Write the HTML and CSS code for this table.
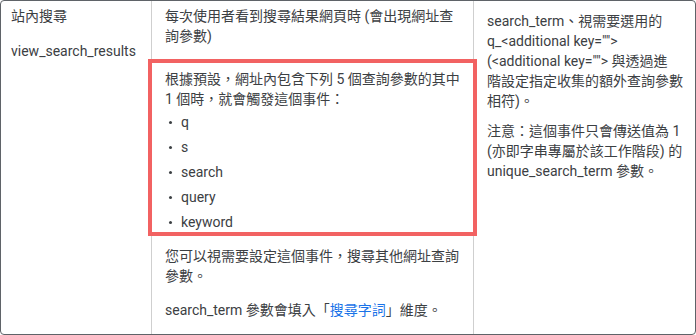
FILE: index.html
```html
<!DOCTYPE html>
<html lang="zh-Hant">
<head>
<meta charset="utf-8">
<link rel="stylesheet" href="styles.css">
</head>
<body>
<div class="frame">
  <div class="row">
    <div class="cell c1">
      <p class="p-first">站內搜尋</p>
      <p class="p-code">view_search_results</p>
    </div>
    <div class="cell c2">
      <p class="p-first">每次使用者看到搜尋結果網頁時 (會出現網址查詢參數)</p>
      <div class="highlight">
        <p class="p-lead">根據預設，網址內包含下列 5 個查詢參數的其中 1 個時，就會觸發這個事件：</p>
        <ul class="params">
          <li>q</li>
          <li>s</li>
          <li>search</li>
          <li>query</li>
          <li>keyword</li>
        </ul>
      </div>
      <p class="p-after">您可以視需要設定這個事件，搜尋其他網址查詢參數。</p>
      <p class="p-after">search_term 參數會填入「<a class="link" href="#">搜尋字詞</a>」維度。</p>
    </div>
    <div class="cell c3">
      <p class="p-first3">search_term、視需要選用的 q_&lt;additional key=""&gt; (&lt;additional key=""&gt; 與透過進<span class="nw">階設定指定收集的額外查詢參數</span>相符)。</p>
      <p class="p-note">注意：這個事件只會傳送值為 1 (亦即字串專屬於該工作階段) 的 unique_search_term 參數。</p>
    </div>
  </div>
</div>
</body>
</html>
```

FILE: styles.css
```css
html, body {
  margin: 0;
  padding: 0;
  background: #ffffff;
}

body {
  font-family: Roboto, "Noto Sans CJK TC", sans-serif;
  font-size: 14px;
  line-height: 20px;
  color: #3c4043;
}

.frame {
  box-sizing: border-box;
  width: 696px;
  height: 335px;
  border: 1px solid #5f6368;
  border-radius: 4px;
  overflow: hidden;
}

.row {
  display: grid;
  grid-template-columns: 151px 322px 1fr;
  height: 100%;
}

.cell {
  border-right: 1px solid #cfcfcf;
}

.cell:last-child {
  border-right: none;
}

.c1 {
  padding: 5px 10px 0 10px;
}

.c2 {
  padding: 5px 12px 0 13px;
}

.c3 {
  padding: 10px 11px 0 13px;
}

p {
  margin: 0;
}

.c1 .p-code {
  margin-top: 15px;
}

.highlight {
  margin: 13px -16px 0 -17px;
  border: 4px solid #f26262;
  padding: 6px 12px 0 13px;
}

.params {
  list-style: none;
  margin: 3px 0 0 0;
  padding: 0;
}

.params li {
  position: relative;
  padding-left: 16px;
  margin-bottom: 5px;
}

.params li:last-child {
  margin-bottom: 0;
}

.params li::before {
  content: "";
  position: absolute;
  left: 4px;
  top: 9px;
  width: 3px;
  height: 3px;
  border-radius: 50%;
  background: #3c4043;
}

.p-after {
  margin-top: 10px;
}

.p-after + .p-after {
  margin-top: 14px;
}

.p-note {
  margin-top: 10px;
}

.nw {
  white-space: nowrap;
}

.link {
  color: #1a73e8;
  text-decoration: none;
}
```
